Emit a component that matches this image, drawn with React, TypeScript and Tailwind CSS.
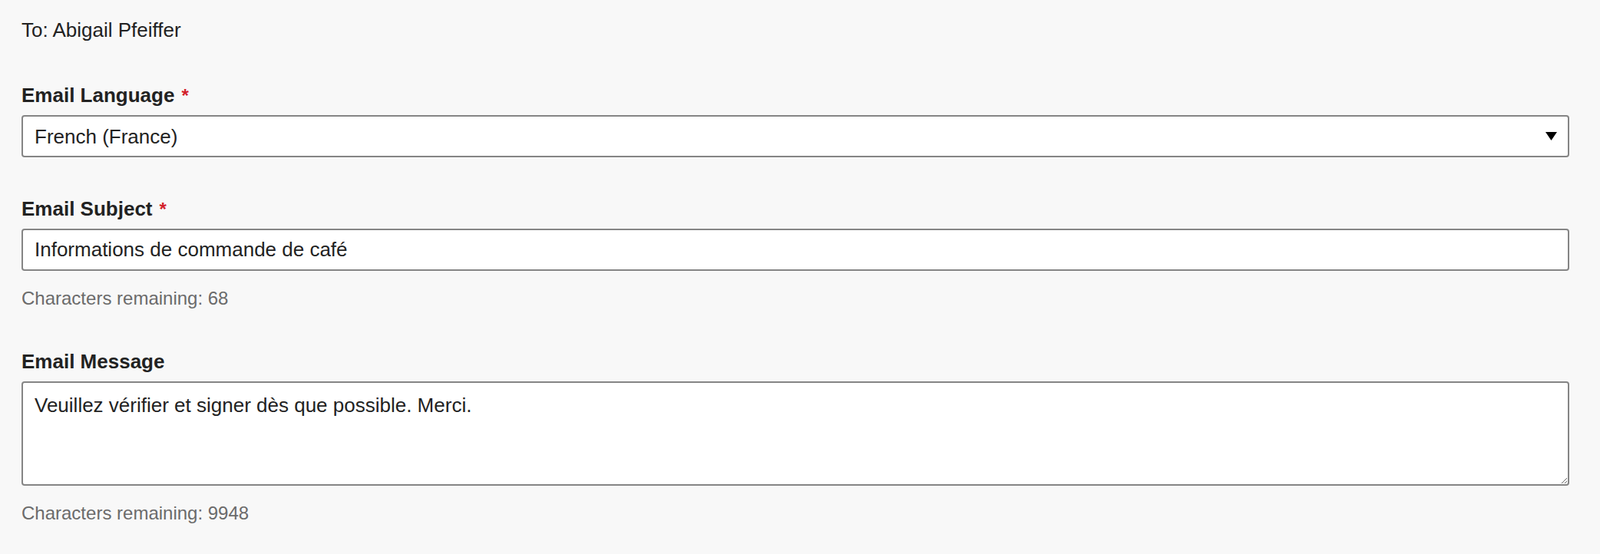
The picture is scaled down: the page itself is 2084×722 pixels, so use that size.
import { useState } from 'react';

const font = { fontFamily: '"Liberation Sans", Arial, sans-serif' };

function Label({ children, required }: { children: string; required?: boolean }) {
  return (
    <div className="text-[26px] leading-[30px] font-bold text-[#222222]">
      {children}
      {required && <span className="text-[#d3202a] ml-[9px] text-[24px]">*</span>}
    </div>
  );
}

function Hint({ children }: { children: string }) {
  return <div className="mt-[22px] text-[24px] leading-[28px] text-[#6b6b6b]">{children}</div>;
}

export default function App() {
  const [subject, setSubject] = useState('Informations de commande de café');
  const [message, setMessage] = useState('Veuillez vérifier et signer dès que possible. Merci.');

  return (
    <div className="min-h-screen bg-[#f8f8f8] text-[#222222]" style={font}>
      <div className="pl-[28px] pr-[40px] pt-[24px] pb-[40px] flex flex-col">
        <div className="text-[26px] leading-[30px]">To: Abigail Pfeiffer</div>

        {/* Language */}
        <div className="mt-[55px]">
          <Label required>Email Language</Label>
          <div className="relative mt-[10px]">
            <select
              className="w-full h-[55px] appearance-none bg-white border-2 border-[#858585] rounded-[4px] pl-[15px] pr-[60px] text-[26px] leading-[30px] text-[#222222] outline-none"
              style={font}
              defaultValue="fr-FR"
            >
              <option value="en-US">English (United States)</option>
              <option value="fr-FR">French (France)</option>
              <option value="de-DE">German (Germany)</option>
            </select>
            <svg
              className="pointer-events-none absolute right-[16px] top-[22px]"
              width="15"
              height="11"
              viewBox="0 0 15 11"
            >
              <path d="M0 0 H15 L7.5 11 Z" fill="#000" />
            </svg>
          </div>
        </div>

        {/* Subject */}
        <div className="mt-[52px]">
          <Label required>Email Subject</Label>
          <input
            value={subject}
            onChange={(e) => setSubject(e.target.value)}
            className="mt-[10px] w-full h-[55px] bg-white border-2 border-[#858585] rounded-[4px] px-[15px] text-[26px] leading-[30px] text-[#222222] outline-none"
            style={font}
          />
          <Hint>{`Characters remaining: ${100 - subject.length}`}</Hint>
        </div>

        {/* Message */}
        <div className="mt-[53px]">
          <Label>Email Message</Label>
          <textarea
            value={message}
            onChange={(e) => setMessage(e.target.value)}
            className="mt-[11px] block w-full h-[136px] bg-white border-2 border-[#858585] rounded-[4px] px-[15px] pt-[14px] text-[26px] leading-[30px] text-[#222222] outline-none resize-y"
            style={font}
          />
          <Hint>{`Characters remaining: ${10000 - message.length}`}</Hint>
        </div>
      </div>
    </div>
  );
}
